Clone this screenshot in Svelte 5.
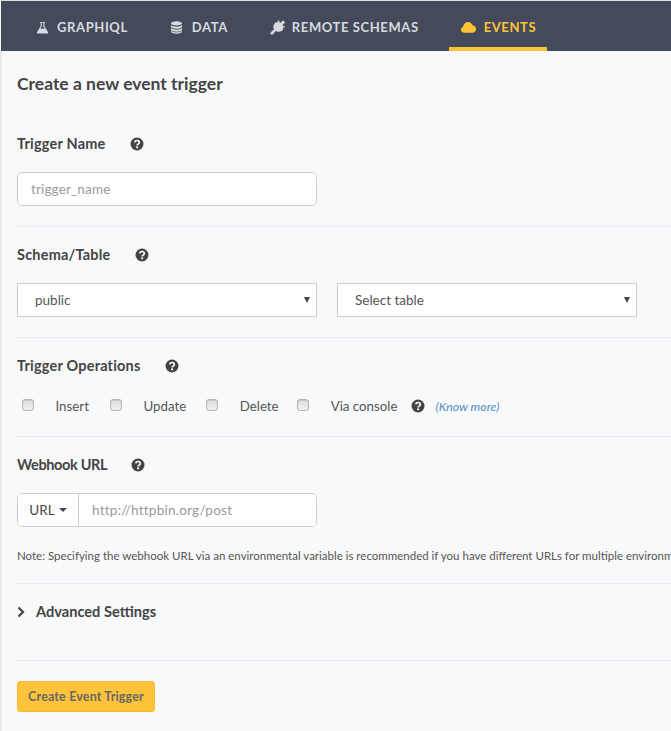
<script>
const operations = [
  { label: 'Insert', gap: 'op-insert' },
  { label: 'Update', gap: 'op-update' },
  { label: 'Delete', gap: 'op-delete' },
  { label: 'Via console', gap: 'op-console' }
];
</script>

{#snippet help()}
  <svg class="help" viewBox="0 0 14 14" aria-hidden="true">
    <circle cx="7" cy="7" r="6.5" fill="#444" />
    <path d="M4.8 5.4C4.9 4.1 5.9 3.5 7.1 3.5c1.3 0 2.2.8 2.2 1.9 0 1.7-2.2 1.7-2.2 3.1" fill="none" stroke="#f8f9fb" stroke-width="1.7" />
    <rect x="6.1" y="9.4" width="2" height="1.8" fill="#f8f9fb" />
  </svg>
{/snippet}

<div class="page">
  <nav class="topbar">
    <a class="tab tab-graphiql" href="#graphiql">
      <svg class="icon flask" viewBox="0 0 14 14" aria-hidden="true"><path d="M4 1h6v1H9v3.600l4 6.600c.4.7 0 1.300-.8 1.300H1.800c-.8 0-1.200-.6-.8-1.300l4-6.600V2H4zM6.200 2v4L4.700 8.400h4.600L7.800 6V2z" fill-rule="evenodd" /></svg>
      GRAPHIQL
    </a>
    <a class="tab tab-data" href="#data">
      <svg class="icon" viewBox="0 0 14 14" aria-hidden="true">
        <ellipse cx="7" cy="2.600" rx="6" ry="2.200" />
        <path d="M1 4.400c1 1.300 3.400 1.700 6 1.700s5-.4 6-1.700v1.900c0 1.200-2.700 2.100-6 2.100s-6-.9-6-2.100z" />
        <path d="M1 7.600c1 1.300 3.400 1.700 6 1.700s5-.4 6-1.700v1.800c0 1.200-2.700 2.100-6 2.100s-6-.9-6-2.100z" />
        <path d="M1 10.600c1 1.200 3.400 1.600 6 1.600s5-.4 6-1.600v1c0 1.200-2.700 2-6 2s-6-.8-6-2z" />
      </svg>
      DATA
    </a>
    <a class="tab tab-remote" href="#remote">
      <svg class="icon plug" viewBox="0 0 16 16" aria-hidden="true">
        <path d="M15 3.500 12.300 6.200l1.200 1.200 1.500-.6-.3 1.200-2.200 1.800.8.900-1.300 1C10 13 7.500 13.200 5.700 12L2.800 15.500H1L.5 15l.1-1.500L4 10.300C2.900 8.500 3.200 6 4.800 4.300l1-1.300.9.800L8.500 1.600l1.200-.3-.6 1.500 1.300 1.200L13 1.300z" />
      </svg>
      REMOTE SCHEMAS
    </a>
    <a class="tab active" href="#events">
      <svg class="icon cloud" viewBox="0 0 15 11" aria-hidden="true"><path d="M3.600 10.800C1.600 10.800 0 9.500 0 7.700c0-1.300.8-2.400 2.100-2.900C2.300 2.100 4.400 0 7 0c2.100 0 3.900 1.300 4.600 3.300 1.900.2 3.400 1.900 3.400 3.900 0 2-1.600 3.600-3.600 3.600z" /></svg>
      EVENTS
    </a>
  </nav>

  <main class="content">
    <h2 class="title">Create a new event trigger</h2>

    <section class="name-section">
      <h4 class="label">Trigger Name {@render help()}</h4>
      <input class="text-input" placeholder="trigger_name" />
    </section>

    <section class="schema-section">
      <h4 class="label">Schema/Table {@render help()}</h4>
      <div class="selects">
        <div class="select">public<span class="caret"></span></div>
        <div class="select">Select table<span class="caret"></span></div>
      </div>
    </section>

    <section class="ops-section">
      <h4 class="label">Trigger Operations {@render help()}</h4>
      <div class="ops">
        {#each operations as op}
          <label class={op.gap}><input type="checkbox" /><span>{op.label}</span></label>
        {/each}
        {@render help()}
        <a class="know" href="#more">(Know more)</a>
      </div>
    </section>

    <section class="webhook-section">
      <h4 class="label">Webhook URL {@render help()}</h4>
      <div class="url-group">
        <button class="url-type">URL<span class="down"></span></button>
        <input placeholder="http://httpbin.org/post" />
      </div>
      <p class="note">Note: Specifying the webhook URL via an environmental variable is recommended if you have different URLs for multiple environments.</p>
    </section>

    <section class="advanced">
      <svg class="chevron" viewBox="0 0 8 12" aria-hidden="true"><path d="M1.500 1.500 6 6l-4.500 4.500" fill="none" stroke="#444" stroke-width="2.200" /></svg>
      <span>Advanced Settings</span>
    </section>

    <div class="actions">
      <button class="create">Create Event Trigger</button>
    </div>
  </main>
</div>

<style>
  :global(body) {
    background: #fff;
    overflow: hidden;
  }
  .page {
    height: 731px;
    width: 671px;
    padding-top: 1px;
    box-sizing: border-box;
    overflow: hidden;
    font-family: Lato, "Noto Sans", sans-serif;
    color: #444;
    background: #f8f9fb;
  }
  .topbar {
    height: 50px;
    background: #444a5c;
    display: flex;
    box-sizing: border-box;
    padding-left: 19px;
    margin-left: 1px;
    box-shadow: 0 -1px 0 #ddd;
  }
  .tab {
    display: flex;
    align-items: center;
    height: 50px;
    box-sizing: border-box;
    padding: 2px 0 0;
    color: #d9dadf;
    text-decoration: none;
    font-size: 13px;
    font-weight: 700;
    letter-spacing: 0.6px;
  }
  .tab-graphiql { padding-left: 16px; margin-right: 42px; }
  .tab-data { margin-right: 42px; }
  .tab-remote { margin-right: 30px; }
  .active {
    color: #ffc433;
    border-bottom: 4px solid #ffc433;
    padding: 6px 0 0 12px;
    width: 98px;
  }
  .icon {
    width: 13px;
    height: 13px;
    margin-right: 9px;
    fill: currentColor;
    flex: none;
  }
  .flask { margin-right: 8px; }
  .plug { width: 16px; height: 16px; margin-right: 6px; }
  .cloud { width: 15px; height: 11px; margin-right: 8px; }
  .content {
    height: 680px;
    border-left: 2px solid #e9e9ea;
    padding-left: 15px;
    box-sizing: border-box;
    overflow: hidden;
  }
  .title {
    margin: 0;
    padding-top: 23px;
    height: 74px;
    box-sizing: border-box;
    font-size: 17.500px;
    line-height: 20px;
    font-weight: 700;
  }
  .label {
    margin: 0;
    height: 20px;
    display: flex;
    align-items: center;
    font-size: 14.500px;
    letter-spacing: 0.2px;
    line-height: 20px;
    font-weight: 700;
    white-space: nowrap;
  }
  .help {
    width: 14px;
    height: 14px;
    margin-left: 24px;
    flex: none;
  }
  section {
    box-sizing: border-box;
    border-bottom: 1px solid #eaecef;
    margin-right: -15px;
    padding-top: 18px;
  }
  .name-section { height: 93px; margin-top: 9px; padding-top: 0; }
  .schema-section { height: 111px; }
  .text-input, .url-group {
    margin-top: 18px;
    width: 300px;
    height: 34px;
    box-sizing: border-box;
    border: 1px solid #ccc;
    border-radius: 5px;
    background: #fff;
    display: flex;
  }
  .text-input {
    padding: 0 13px;
    font: inherit;
    font-size: 13.500px;
    letter-spacing: 0.15px;
    color: #555;
  }
  input::placeholder { color: #999; opacity: 1; }
  .selects {
    display: flex;
    gap: 20px;
    margin-top: 18px;
  }
  .select {
    width: 300px;
    height: 34px;
    box-sizing: border-box;
    border: 1px solid #ccc;
    background: #fff;
    padding-left: 17px;
    font-size: 13.500px;
    line-height: 32px;
    color: #555;
    display: flex;
    justify-content: space-between;
    align-items: center;
  }
  .caret {
    margin-right: 6px;
    border-top: 6px solid #444;
    border-left: 3px solid transparent;
    border-right: 3px solid transparent;
  }
  .ops-section { height: 99px; }
  .ops {
    display: flex;
    align-items: center;
    height: 20px;
    margin-top: 20px;
    padding-left: 5px;
    font-size: 13.300px;
    color: #555;
  }
  .ops label { display: flex; align-items: center; }
  .ops input {
    appearance: none;
    width: 12px;
    height: 12px;
    box-sizing: border-box;
    margin: -3px 0 0 0;
    border: 1px solid #b5b5b8;
    border-radius: 3px;
    background: linear-gradient(#dedee2, #f0f0f2);
    box-shadow: inset 0 1px 1px #c5c5c8;
  }
  .ops span { margin-left: 21.500px; }
  .op-insert { margin-right: 21px; }
  .op-update { margin-right: 20px; }
  .op-delete { margin-right: 18.500px; }
  .ops .help { margin-left: 14px; }
  .know {
    margin-left: 10px;
    font-size: 12.300px;
    font-style: italic;
    color: #337ab7;
    text-decoration: none;
    opacity: 0.85;
  }
  .webhook-section { height: 147px; }
  .webhook-section .label { letter-spacing: -0.35px; }
  .url-group { overflow: hidden; }
  .url-type {
    width: 61px;
    border: 0;
    border-right: 1px solid #ccc;
    background: #fff;
    font: inherit;
    font-size: 13.500px;
    color: #444;
    padding: 0;
    display: flex;
    align-items: center;
    justify-content: center;
  }
  .down {
    margin-left: 4px;
    border-top: 4px solid #444a5c;
    border-left: 4px solid transparent;
    border-right: 4px solid transparent;
  }
  .url-group input {
    flex: 1;
    min-width: 0;
    border: 0;
    padding: 0 13px;
    font: inherit;
    font-size: 13.500px;
    letter-spacing: 0.25px;
    outline: none;
  }
  .note {
    margin: 21px 0 0;
    font-size: 11.500px;
    line-height: 16px;
    color: #555;
    white-space: nowrap;
  }
  .advanced {
    height: 77px;
    display: flex;
    align-items: flex-start;
    font-size: 14.600px;
    font-weight: 700;
    line-height: 20px;
  }
  .chevron {
    width: 8px;
    height: 12px;
    margin: 4px 11px 0 0;
  }
  .actions { padding-top: 20px; }
  .create {
    width: 138px;
    height: 31px;
    border: 1px solid #f6bd33;
    border-radius: 3px;
    background: #ffc33b;
    color: #666;
    font: inherit;
    font-size: 12.500px;
    letter-spacing: 0.15px;
    font-weight: 700;
    padding: 0;
  }
</style>
